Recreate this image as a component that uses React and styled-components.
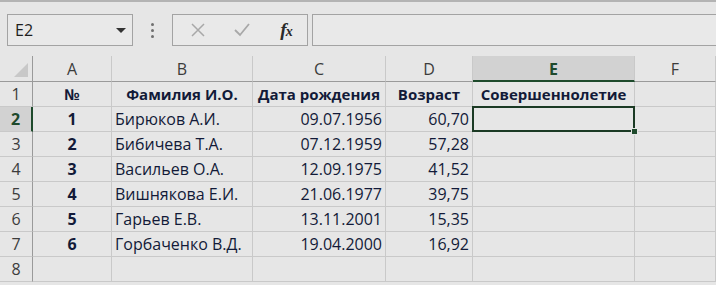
import React from "react";
import styled, { createGlobalStyle, css } from "styled-components";

const GlobalStyle = createGlobalStyle`
  html, body { margin: 0; padding: 0; }
  body {
    background: #e6e6e6;
    font-family: "Open Sans", "Noto Sans", sans-serif;
    overflow: hidden;
  }
`;

const Page = styled.div`
  width: 716px;
  height: 285px;
  overflow: hidden;
  background: #e6e6e6;
`;

const Toolbar = styled.div`
  height: 56px;
  border-top: 2px solid #b3b3b3;
  display: flex;
  align-items: flex-start;
  padding: 12px 0 0 7px;
  box-sizing: border-box;
`;

const NameBox = styled.div`
  width: 126px;
  height: 32px;
  box-sizing: border-box;
  border: 1px solid #a3a3a3;
  background: #e9e9e9;
  display: flex;
  align-items: center;
  justify-content: space-between;
  padding: 0 6px 0 7px;
  font-size: 16px;
  color: #1e1e1e;
`;

const Caret = styled.span`
  width: 0;
  height: 0;
  border-left: 5px solid transparent;
  border-right: 5px solid transparent;
  border-top: 5px solid #333;
`;

const DotsWrap = styled.div`
  width: 39px;
  height: 32px;
  display: flex;
  flex-direction: column;
  align-items: center;
  justify-content: center;
  gap: 3px;
`;

const Dot = styled.span`
  width: 3px;
  height: 3px;
  border-radius: 50%;
  background: #6f6f6f;
`;

const FxBox = styled.div`
  width: 136px;
  height: 32px;
  box-sizing: border-box;
  border: 1px solid #a3a3a3;
  background: #e9e9e9;
  display: flex;
  align-items: center;
  padding-left: 14px;
  gap: 22px;
`;

const IconSlot = styled.span`
  width: 22px;
  height: 22px;
  display: flex;
  align-items: center;
  justify-content: center;
`;

const Fx = styled.span`
  font-family: "Liberation Serif", "DejaVu Serif", serif;
  font-style: italic;
  font-weight: bold;
  font-size: 19px;
  color: #2a2a2a;
  letter-spacing: -1px;
  & small {
    font-size: 14px;
  }
`;

const FormulaBar = styled.div`
  flex: 1;
  height: 32px;
  margin-left: 4px;
  box-sizing: border-box;
  border: 1px solid #a3a3a3;
  border-right: none;
  background: #e9e9e9;
`;

const Grid = styled.div`
  display: grid;
  grid-template-columns: 33px 79px 141px 133px 87px 162px 1fr;
  grid-auto-rows: 25px;
  grid-template-rows: 26px;
`;

const ColHead = styled.div`
  box-sizing: border-box;
  display: flex;
  align-items: center;
  justify-content: center;
  font-size: 16px;
  color: #3c3c3c;
  border-right: 1px solid #c9c9c9;
  border-bottom: 1px solid #9a9a9a;
  ${(p) =>
    p.$active &&
    css`
      background: #d2d2d2;
      border-bottom: 2px solid #1e4a2c;
      color: #1e4a2c;
      font-weight: 700;
      padding-top: 1px;
    `}
`;

const Corner = styled.div`
  box-sizing: border-box;
  border-right: 1px solid #9a9a9a;
  border-bottom: 1px solid #9a9a9a;
  position: relative;
  &::after {
    content: "";
    position: absolute;
    right: 4px;
    bottom: 4px;
    width: 0;
    height: 0;
    border-left: 14px solid transparent;
    border-bottom: 14px solid #c8c8c8;
  }
`;

const RowHead = styled.div`
  box-sizing: border-box;
  display: flex;
  align-items: center;
  justify-content: center;
  font-size: 16px;
  color: #3c3c3c;
  border-right: 1px solid #9a9a9a;
  border-bottom: 1px solid #c9c9c9;
  ${(p) =>
    p.$active &&
    css`
      background: #d2d2d2;
      border-right: 2px solid #1e4a2c;
      color: #1e4a2c;
      font-weight: 700;
    `}
`;

const Cell = styled.div`
  box-sizing: border-box;
  position: relative;
  display: flex;
  align-items: center;
  justify-content: ${(p) =>
    p.$align === "right" ? "flex-end" : p.$align === "center" ? "center" : "flex-start"};
  padding: 0 3px;
  font-size: ${(p) => (p.$head ? "15px" : "16px")};
  font-weight: ${(p) => (p.$bold ? 700 : 400)};
  color: #121a38;
  white-space: nowrap;
  border-right: 1px solid #c9c9c9;
  border-bottom: 1px solid #c9c9c9;
  ${(p) =>
    p.$selected &&
    css`
      &::after {
        content: "";
        position: absolute;
        left: -1px;
        top: -1px;
        right: -1px;
        bottom: -1px;
        border: 2px solid #1b3a24;
        z-index: 1;
      }
      &::before {
        content: "";
        position: absolute;
        right: -4px;
        bottom: -4px;
        width: 5px;
        height: 5px;
        background: #1e4a2c;
        border: 1px solid #e6e6e6;
        z-index: 2;
      }
    `}
`;

const cols = ["A", "B", "C", "D", "E", "F"];

const data = [
  [
    { t: "№", a: "center", b: true, h: true },
    { t: "Фамилия И.О.", a: "center", b: true, h: true },
    { t: "Дата рождения", a: "center", b: true, h: true },
    { t: "Возраст", a: "center", b: true, h: true },
    { t: "Совершеннолетие", a: "center", b: true, h: true },
    { t: "" },
  ],
  ["1", "Бирюков А.И.", "09.07.1956", "60,70"],
  ["2", "Бибичева Т.А.", "07.12.1959", "57,28"],
  ["3", "Васильев О.А.", "12.09.1975", "41,52"],
  ["4", "Вишнякова Е.И.", "21.06.1977", "39,75"],
  ["5", "Гарьев Е.В.", "13.11.2001", "15,35"],
  ["6", "Горбаченко В.Д.", "19.04.2000", "16,92"],
  [],
];

function rowCells(row, r) {
  if (r === 0) return row;
  const [n, name, date, age] = row;
  return [
    { t: n || "", a: "center", b: true },
    { t: name || "", a: "left" },
    { t: date || "", a: "right" },
    { t: age || "", a: "right" },
    { t: "", sel: r === 1 },
    { t: "" },
  ];
}

const CrossIcon = () => (
  <svg width="14" height="14" viewBox="0 0 14 14">
    <path d="M1 1 L13 13 M13 1 L1 13" stroke="#a8a8a8" strokeWidth="1.5" fill="none" />
  </svg>
);

const CheckIcon = () => (
  <svg width="16" height="14" viewBox="0 0 16 14">
    <path d="M1 7 L6 12 L15 1" stroke="#a8a8a8" strokeWidth="1.8" fill="none" />
  </svg>
);

export default function App() {
  return (
    <Page>
      <GlobalStyle />
      <Toolbar>
        <NameBox>
          <span>E2</span>
          <Caret />
        </NameBox>
        <DotsWrap>
          <Dot />
          <Dot />
          <Dot />
        </DotsWrap>
        <FxBox>
          <IconSlot>
            <CrossIcon />
          </IconSlot>
          <IconSlot>
            <CheckIcon />
          </IconSlot>
          <IconSlot>
            <Fx>
              f<small>x</small>
            </Fx>
          </IconSlot>
        </FxBox>
        <FormulaBar />
      </Toolbar>
      <Grid>
        <Corner />
        {cols.map((c) => (
          <ColHead key={c} $active={c === "E"}>
            {c}
          </ColHead>
        ))}
        {data.map((row, r) => (
          <React.Fragment key={r}>
            <RowHead $active={r === 1}>{r + 1}</RowHead>
            {rowCells(row, r).map((cell, ci) => (
              <Cell
                key={ci}
                $align={cell.a}
                $bold={cell.b}
                $head={cell.h}
                $selected={cell.sel}
              >
                {cell.t}
              </Cell>
            ))}
          </React.Fragment>
        ))}
      </Grid>
    </Page>
  );
}
